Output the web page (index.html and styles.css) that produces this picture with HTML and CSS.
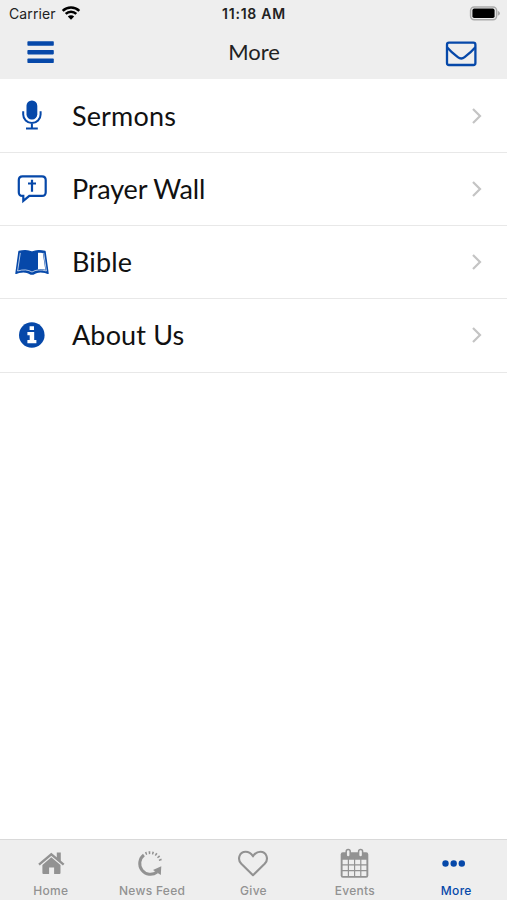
FILE: index.html
```html
<!DOCTYPE html>
<html lang="en">
<head>
<meta charset="utf-8">
<meta name="viewport" content="width=device-width, initial-scale=1">
<title>More</title>
<link rel="stylesheet" href="styles.css">
</head>
<body>
<div class="app">
  <header class="header">
    <div class="status">
      <div class="carrier">
        <span>Carrier</span>
        <svg class="wifi" width="20" height="16" viewBox="0 0 20 16">
          <path d="M1.7 5.8a12 12 0 0 1 16.6 0M4.7 8.9a7.6 7.6 0 0 1 10.6 0" fill="none" stroke="#000" stroke-width="2.5"/>
          <path d="M10 14.7l-3.2-3.2a4.6 4.6 0 0 1 6.4 0z"/>
        </svg>
      </div>
      <span class="clock">11:18 AM</span>
      <svg class="battery" width="32" height="16" viewBox="0 0 32 16">
        <rect x="1.600" y=".9" width="26" height="12.800" rx="3.600" fill="#eee" stroke="#aaa" stroke-width="1.500"/>
        <rect x="3.400" y="2.600" width="22.200" height="9.400" rx="1.800"/>
        <path d="M28.800 4.800q2.200 1 2.200 2.500t-2.200 2.500z" fill="#aaa"/>
      </svg>
    </div>
    <div class="nav">
      <svg class="menu" width="28" height="24" viewBox="0 0 28 24" fill="#0648a9">
        <rect x=".4" y="1.200" width="26.400" height="4.500" rx=".8"/>
        <rect x=".4" y="9.900" width="26.400" height="4.500" rx=".8"/>
        <rect x=".4" y="18.600" width="26.400" height="4.500" rx=".8"/>
      </svg>
      <h1 class="title">More</h1>
      <svg class="mail" width="32" height="26" viewBox="0 0 32 26" fill="none" stroke="#0648a9" stroke-width="2.300">
        <rect x="2" y="1.700" width="28.400" height="22.300" rx="2"/>
        <path d="M2 6.200c4 4.600 7.300 7.300 10.800 10q3.400 2.600 6.800 0C23 13.500 26.400 10.800 30.400 6.200"/>
      </svg>
    </div>
  </header>

  <main class="list">
    <div class="row">
      <svg class="icon" viewBox="0 0 40 40">
        <rect x="14.500" y="4.600" width="10.800" height="18.800" rx="5.200" fill="#0648a9"/>
        <path d="M11.200 15.200v3.200a8.700 8.700 0 0 0 17.400 0v-3.200M19.900 27v5M14 32.400h11.800" fill="none" stroke="#0648a9" stroke-width="2"/>
      </svg>
      <span class="label sermons">Sermons</span>
      <svg class="chevron" viewBox="0 0 12 18"><path d="M2 2l7 7-7 7"/></svg>
    </div>
    <div class="row">
      <svg class="icon" viewBox="0 0 40 40">
        <path d="M10.500 7.300h19.500q3.700 0 3.700 3.700v12.200q0 3.700-3.700 3.700H17.300l-6 5v-5h-.8q-3.700 0-3.700-3.700V11q0-3.700 3.700-3.700z" fill="none" stroke="#0648a9" stroke-width="2.200"/>
        <path d="M20 10.800v12M16 14.500h8" fill="none" stroke="#0648a9" stroke-width="2.200"/>
      </svg>
      <span class="label prayer">Prayer Wall</span>
      <svg class="chevron" viewBox="0 0 12 18"><path d="M2 2l7 7-7 7"/></svg>
    </div>
    <div class="row">
      <svg class="icon" viewBox="0 0 40 40">
        <path d="M7 9.500Q14.500 7.500 20 10.100q5.500-2.600 13-.6L36 31.400q-7-2.700-12.500-.6l-2 1.200h-3l-2-1.200Q11 28.700 4 31.400z" fill="#0648a9" stroke="#0648a9" stroke-width="1.400" stroke-linejoin="round"/>
        <path d="M8.300 10.900L5.600 29q8.500-2.600 14.400 1 5.900-3.600 14.400-1L31.700 10.900" fill="none" stroke="#fff" stroke-width=".7"/>
        <path d="M26 10.800q3-.4 4.800.2l2.500 16.700q-3.400-.9-7.300-.5z" fill="#fff"/>
      </svg>
      <span class="label bible">Bible</span>
      <svg class="chevron" viewBox="0 0 12 18"><path d="M2 2l7 7-7 7"/></svg>
    </div>
    <div class="row">
      <svg class="icon" viewBox="0 0 40 40">
        <circle cx="19.800" cy="20" r="12.800" fill="#0648a9"/>
        <path d="M17.600 11.200h4.400v3.800h-4.400zM15.400 17h6.800v8h2.200v3.300h-9v-3.300h2.300v-4.800h-2.300z" fill="#fff"/>
      </svg>
      <span class="label about">About Us</span>
      <svg class="chevron" viewBox="0 0 12 18"><path d="M2 2l7 7-7 7"/></svg>
    </div>
  </main>

  <nav class="tabs">
    <div class="tab">
      <svg viewBox="0 0 34 34" fill="#929292">
        <path d="M17.300 10.200l9.200 7.700v8q0 1-1 1h-5.400v-6.500h-5v6.500H9.400q-1 0-1-1v-8z"/>
        <path d="M5 17.700L17.300 7.400l12.400 10.300" fill="none" stroke="#929292" stroke-width="2.400"/>
        <path d="M22.800 5.600h4v9l-4-3.300z"/>
      </svg>
      <span>Home</span>
    </div>
    <div class="tab">
      <svg viewBox="0 0 34 34" fill="none" stroke="#929292">
        <path d="M8.900 8A10.200 10.200 0 1 0 22 25" stroke-width="3"/>
        <path d="M10.500 6.700a10.700 10.700 0 0 1 15.200 8.200" stroke-width="2.800" stroke-dasharray="1.500 1.900"/>
        <path d="M26.300 19.300l-.5 8.800-7.800-5z" fill="#929292" stroke="none"/>
      </svg>
      <span>News Feed</span>
    </div>
    <div class="tab">
      <svg viewBox="0 0 34 34" fill="none" stroke="#929292" stroke-width="2.100" stroke-linejoin="round">
        <path d="M17 28.200L5.300 16.800C.9 12.200 3.500 4.700 9.600 4.700c3.700 0 5.900 2.200 7.400 4.600 1.500-2.400 3.700-4.600 7.400-4.600 6.100 0 8.700 7.500 4.300 12.100z"/>
      </svg>
      <span>Give</span>
    </div>
    <div class="tab">
      <svg viewBox="0 0 34 34">
        <rect x="2.700" y="5.300" width="27.600" height="25.500" rx="2.200" fill="#929292"/>
        <path d="M4.600 12.700h5.200v4.600h-5.200zM11 12.700h5v4.600h-5zM17.200 12.700h5v4.600h-5zM23.400 12.700h5v4.600h-5zM4.600 18.500h5.200v4.600h-5.200zM11 18.500h5v4.600h-5zM17.200 18.500h5v4.600h-5zM23.400 18.500h5v4.600h-5zM4.600 24.300h5.200v4.600h-5.200zM11 24.300h5v4.600h-5zM17.200 24.300h5v4.600h-5zM23.400 24.300h5v4.600h-5z" fill="#eee"/>
        <g fill="#eee" stroke="#929292" stroke-width="1.500"><rect x="8.200" y="2.500" width="4" height="7.500" rx="2"/><rect x="20.600" y="2.500" width="4" height="7.500" rx="2"/></g>
      </svg>
      <span>Events</span>
    </div>
    <div class="tab active">
      <svg viewBox="0 0 34 34" fill="#0648a9">
        <circle cx="6.500" cy="16.500" r="3.200"/><circle cx="14.700" cy="16.500" r="3.200"/><circle cx="22.800" cy="16.500" r="3.200"/>
      </svg>
      <span>More</span>
    </div>
  </nav>
</div>
</body>
</html>
```
FILE: styles.css
```css
* {
  box-sizing: border-box;
}

body {
  margin: 0;
  background: #fff;
  font-family: Inter, "Liberation Sans", sans-serif;
}

.app {
  display: flex;
  flex-direction: column;
  height: 900px;
}

.header {
  height: 79px;
  background: #eee;
}

.status {
  display: grid;
  grid-template-columns: 1fr auto 1fr;
  height: 28px;
  padding: 5px 6px 0 9px;
}

.carrier {
  display: flex;
  gap: 5px;
  font-size: 14px;
  line-height: 18px;
  letter-spacing: .1px;
  color: #222;
}

.clock {
  margin-left: -2px;
  font-size: 14px;
  font-weight: 600;
  line-height: 18px;
  letter-spacing: .75px;
  color: #222;
}

.battery {
  justify-self: end;
  margin-top: 1px;
}

.nav {
  display: grid;
  grid-template-columns: 1fr auto 1fr;
  align-items: center;
  height: 48px;
  padding: 0 30px 0 27px;
}

.title {
  margin: 0 -2px 0 2px;
  font-family: Lato, sans-serif;
  font-size: 22px;
  font-weight: 400;
  line-height: 28px;
  color: #222;
}

.mail {
  justify-self: end;
  margin-top: 4px;
}

.list {
  flex: 1;
  padding-top: .5px;
}

.row {
  display: flex;
  align-items: center;
  height: 73.25px;
  padding: 0 24px 0 12px;
  border-bottom: 1px solid #e8e8e8;
}

.icon {
  width: 40px;
  height: 40px;
}

.label {
  flex: 1;
  margin-left: 20px;
  font-family: Lato, sans-serif;
  font-size: 27px;
  line-height: 36px;
  letter-spacing: .15px;
  color: #111;
}

.prayer {
  letter-spacing: -.15px;
}

.chevron {
  width: 12px;
  height: 18px;
  fill: none;
  stroke: #c4c4c4;
  stroke-width: 2.2;
}

.tabs {
  display: grid;
  grid-template-columns: repeat(5, 1fr);
  height: 61px;
  background: #eee;
  border-top: 1px solid #d9d9d9;
}

.tab {
  display: flex;
  flex-direction: column;
  align-items: center;
  padding-top: 7px;
  font-size: 12px;
  font-weight: 500;
  line-height: 16px;
  letter-spacing: .3px;
  color: #929292;
}

.tab svg {
  width: 34px;
  height: 34px;
  margin-bottom: 2px;
}

.active {
  color: #0648a9;
}
```
